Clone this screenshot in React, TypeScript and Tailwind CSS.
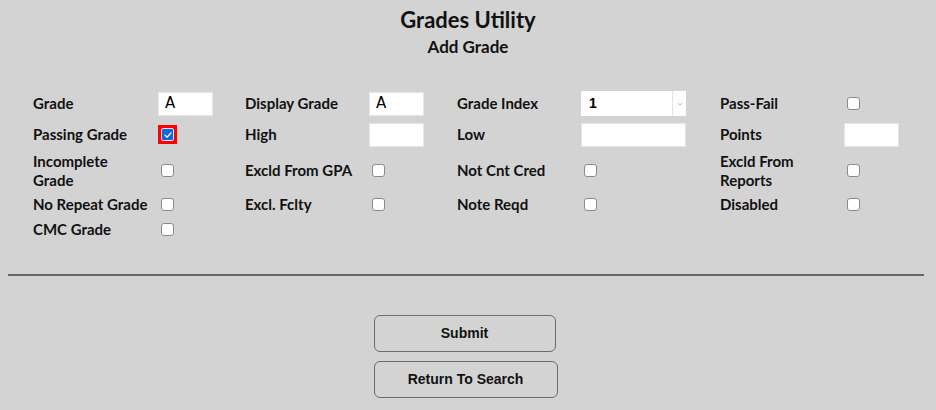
import React, { useState } from "react";

const Check: React.FC<{ checked?: boolean; focused?: boolean }> = ({ checked, focused }) => {
    if (checked) {
        return (
            <span className={"inline-flex items-center justify-center w-[19px] h-[19px] -ml-[3px] " + (focused ? "bg-[#ff0000]" : "")}>
                <span className="w-[13px] h-[13px] rounded-[2px] bg-[#0b68d6] border border-[#d8e4f5] flex items-center justify-center">
                    <svg viewBox="0 0 12 12" className="w-[10px] h-[10px]">
                        <path d="M2.5 6.3 L5 8.6 L9.6 3.4" fill="none" stroke="white" strokeWidth="1.6" strokeLinecap="round" strokeLinejoin="round" />
                    </svg>
                </span>
            </span>
        );
    }
    return <span className="inline-block w-[13px] h-[13px] rounded-[3px] bg-white border border-[#8a8a95]" />;
};

const TextBox: React.FC<{ value?: string; w?: string }> = ({ value, w }) => (
    <div className={"h-[24px] bg-white border border-[#e6e6e6] flex items-center px-[6px] text-[15px] text-black " + (w ?? "w-[55px]")} style={{ fontFamily: '"DejaVu Sans", sans-serif' }}>
        {value}
    </div>
);

const App: React.FC = () => {
    const [passing] = useState<boolean>(true);

    const label = "font-bold text-[15px] leading-[19px] text-[#111]";
    const cell = "flex items-center";

    return (
        <div className="w-[936px] h-[410px] bg-[#d3d3d3] overflow-hidden" style={{ fontFamily: 'Lato, "Noto Sans", sans-serif' }}>
            <div className="text-center pt-[6px]">
                <h1 className="text-[22px] leading-[28px] font-bold text-[#111]">Grades Utility</h1>
                <h2 className="text-[17px] leading-[26px] font-bold text-[#111]">Add Grade</h2>
            </div>

            <div className="grid grid-cols-[125px_87px_124px_88px_124px_139px_124px_60px] grid-rows-[31px_31px_41px_26px_24px] mt-[28px] ml-[33px]">
                {/* row 1 */}
                <div className={cell}><span className={label}>Grade</span></div>
                <div className={cell}><TextBox value="A" /></div>
                <div className={cell}><span className={label}>Display Grade</span></div>
                <div className={cell}><TextBox value="A" /></div>
                <div className={cell}><span className={label}>Grade Index</span></div>
                <div className={cell}>
                    <div className="w-[105px] h-[25px] bg-white flex items-center">
                        <span className="flex-1 pl-[8px] text-[14px] font-bold text-black" style={{ fontFamily: '"Liberation Sans", sans-serif' }}>1</span>
                        <span className="w-[14px] h-full border-l border-[#e2e2e2] flex items-center justify-center">
                            <svg viewBox="0 0 8 5" className="w-[6px] h-[4px]">
                                <path d="M1 1 L4 4 L7 1" fill="none" stroke="#a0a0a0" strokeWidth="1" />
                            </svg>
                        </span>
                    </div>
                </div>
                <div className={cell}><span className={label}>Pass-Fail</span></div>
                <div className={cell + " pl-[3px]"}><Check /></div>

                {/* row 2 */}
                <div className={cell}><span className={label}>Passing Grade</span></div>
                <div className={cell + " pl-[3px]"}><Check checked={passing} focused /></div>
                <div className={cell}><span className={label}>High</span></div>
                <div className={cell}><TextBox /></div>
                <div className={cell}><span className={label}>Low</span></div>
                <div className={cell}><TextBox w="w-[105px]" /></div>
                <div className={cell}><span className={label}>Points</span></div>
                <div className={cell}><TextBox /></div>

                {/* row 3 */}
                <div className={cell}><span className={label}>Incomplete<br />Grade</span></div>
                <div className={cell + " pl-[3px]"}><Check /></div>
                <div className={cell}><span className={label}>Excld From GPA</span></div>
                <div className={cell + " pl-[3px]"}><Check /></div>
                <div className={cell}><span className={label}>Not Cnt Cred</span></div>
                <div className={cell + " pl-[3px]"}><Check /></div>
                <div className={cell}><span className={label}>Excld From<br />Reports</span></div>
                <div className={cell + " pl-[3px]"}><Check /></div>

                {/* row 4 */}
                <div className={cell}><span className={label}>No Repeat Grade</span></div>
                <div className={cell + " pl-[3px]"}><Check /></div>
                <div className={cell}><span className={label}>Excl. Fclty</span></div>
                <div className={cell + " pl-[3px]"}><Check /></div>
                <div className={cell}><span className={label}>Note Reqd</span></div>
                <div className={cell + " pl-[3px]"}><Check /></div>
                <div className={cell}><span className={label}>Disabled</span></div>
                <div className={cell + " pl-[3px]"}><Check /></div>

                {/* row 5 */}
                <div className={cell}><span className={label}>CMC Grade</span></div>
                <div className={cell + " pl-[3px]"}><Check /></div>
            </div>

            <div className="ml-[8px] mt-[33px] mr-[12px] border-t-2 border-[#656565]" />

            <div className="flex flex-col items-center gap-[9px] mt-[39px] pr-[7px]" style={{ fontFamily: '"Liberation Sans", Arial, sans-serif' }}>
                <button className="w-[182px] h-[37px] rounded-[6px] border border-[#6b6b6b] bg-[#d3d3d3] text-[14px] font-bold text-[#111]">
                    Submit
                </button>
                <button className="w-[184px] h-[37px] rounded-[6px] border border-[#6b6b6b] bg-[#d3d3d3] text-[14px] font-bold text-[#111] ml-[2px]">
                    Return To Search
                </button>
            </div>
        </div>
    );
};

export default App;
